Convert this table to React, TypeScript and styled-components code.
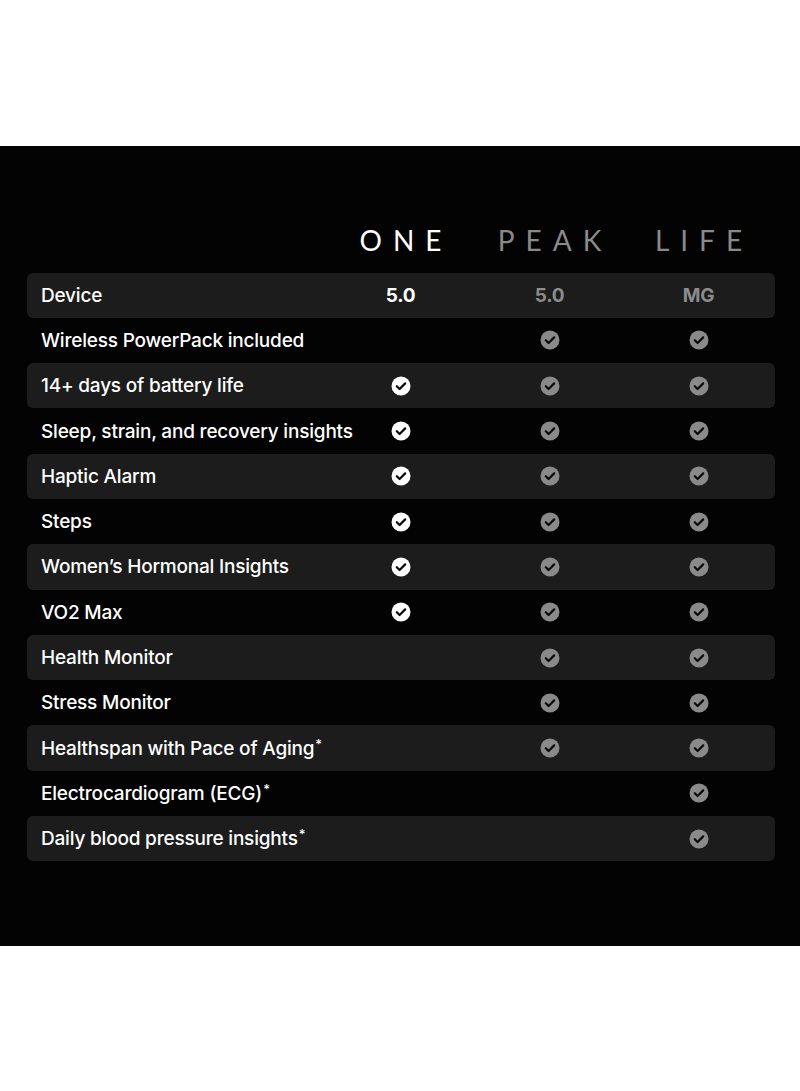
import styled, { createGlobalStyle } from "styled-components";

const GlobalStyle = createGlobalStyle`
  html, body {
    margin: 0;
    padding: 0;
    background: #ffffff;
  }
`;

const Page = styled.div`
  width: 800px;
  height: 1091px;
  display: flex;
  flex-direction: column;
  justify-content: center;
  background: #ffffff;
`;

const Panel = styled.section`
  height: 800px;
  background: #030303;
  box-sizing: border-box;
  padding: 74px 25px 0 27px;
  font-family: "Inter", "Open Sans", "Liberation Sans", sans-serif;
  color: #ffffff;
`;

const Head = styled.div`
  display: grid;
  grid-template-columns: 299px repeat(3, 149px);
  align-items: center;
  height: 40px;
  margin-bottom: 13px;
`;

const Brand = styled.div<{ $active?: boolean }>`
  text-align: center;
  font-family: "Lato", "Liberation Sans", sans-serif;
  font-weight: 400;
  font-size: 28px;
  letter-spacing: 11px;
  padding-left: 11px;
  color: ${(p) => (p.$active ? "#ffffff" : "#8a8a8a")};
`;

const Table = styled.div`
  display: flex;
  flex-direction: column;
`;

const Row = styled.div<{ $shaded?: boolean }>`
  display: grid;
  grid-template-columns: 299px repeat(3, 149px);
  align-items: center;
  height: 45.3px;
  border-radius: 6px;
  background: ${(p) => (p.$shaded ? "#1c1c1c" : "transparent")};
`;

const Label = styled.div`
  padding-left: 14px;
  font-size: 19px;
  font-weight: 500;
  letter-spacing: -0.2px;
  white-space: nowrap;
`;

const Star = styled.sup`
  font-size: 13px;
  vertical-align: 6px;
  line-height: 0;
  margin-left: 1px;
`;

const Cell = styled.div<{ $active?: boolean }>`
  display: flex;
  justify-content: center;
  align-items: center;
  font-size: 19px;
  font-weight: 700;
  letter-spacing: -0.3px;
  color: ${(p) => (p.$active ? "#ffffff" : "#8c8c8c")};
`;

const Check = ({ active }: { active?: boolean }) => (
  <svg width="20" height="20" viewBox="0 0 20 20">
    <circle cx="10" cy="10" r="9.5" fill={active ? "#ffffff" : "#8a8a8a"} />
    <path
      d="M5.8 10.2 L8.6 13 L14.2 7.4"
      fill="none"
      stroke="#0a0a0a"
      strokeWidth="2.2"
      strokeLinecap="round"
      strokeLinejoin="round"
    />
  </svg>
);

type Feature = {
  label: string;
  note?: boolean;
  one: boolean;
  peak: boolean;
  life: boolean;
};

const features: Feature[] = [
  { label: "Wireless PowerPack included", one: false, peak: true, life: true },
  { label: "14+ days of battery life", one: true, peak: true, life: true },
  { label: "Sleep, strain, and recovery insights", one: true, peak: true, life: true },
  { label: "Haptic Alarm", one: true, peak: true, life: true },
  { label: "Steps", one: true, peak: true, life: true },
  { label: "Women’s Hormonal Insights", one: true, peak: true, life: true },
  { label: "VO2 Max", one: true, peak: true, life: true },
  { label: "Health Monitor", one: false, peak: true, life: true },
  { label: "Stress Monitor", one: false, peak: true, life: true },
  { label: "Healthspan with Pace of Aging", note: true, one: false, peak: true, life: true },
  { label: "Electrocardiogram (ECG)", note: true, one: false, peak: false, life: true },
  { label: "Daily blood pressure insights", note: true, one: false, peak: false, life: true },
];

export default function App() {
  return (
    <Page>
      <GlobalStyle />
      <Panel>
        <Head>
          <div />
          <Brand $active>ONE</Brand>
          <Brand>PEAK</Brand>
          <Brand>LIFE</Brand>
        </Head>
        <Table>
          <Row $shaded>
            <Label>Device</Label>
            <Cell $active>5.0</Cell>
            <Cell>5.0</Cell>
            <Cell>MG</Cell>
          </Row>
          {features.map((f, i) => (
            <Row key={f.label} $shaded={i % 2 === 1}>
              <Label>
                {f.label}
                {f.note && <Star>*</Star>}
              </Label>
              <Cell>{f.one && <Check active />}</Cell>
              <Cell>{f.peak && <Check />}</Cell>
              <Cell>{f.life && <Check />}</Cell>
            </Row>
          ))}
        </Table>
      </Panel>
    </Page>
  );
}
